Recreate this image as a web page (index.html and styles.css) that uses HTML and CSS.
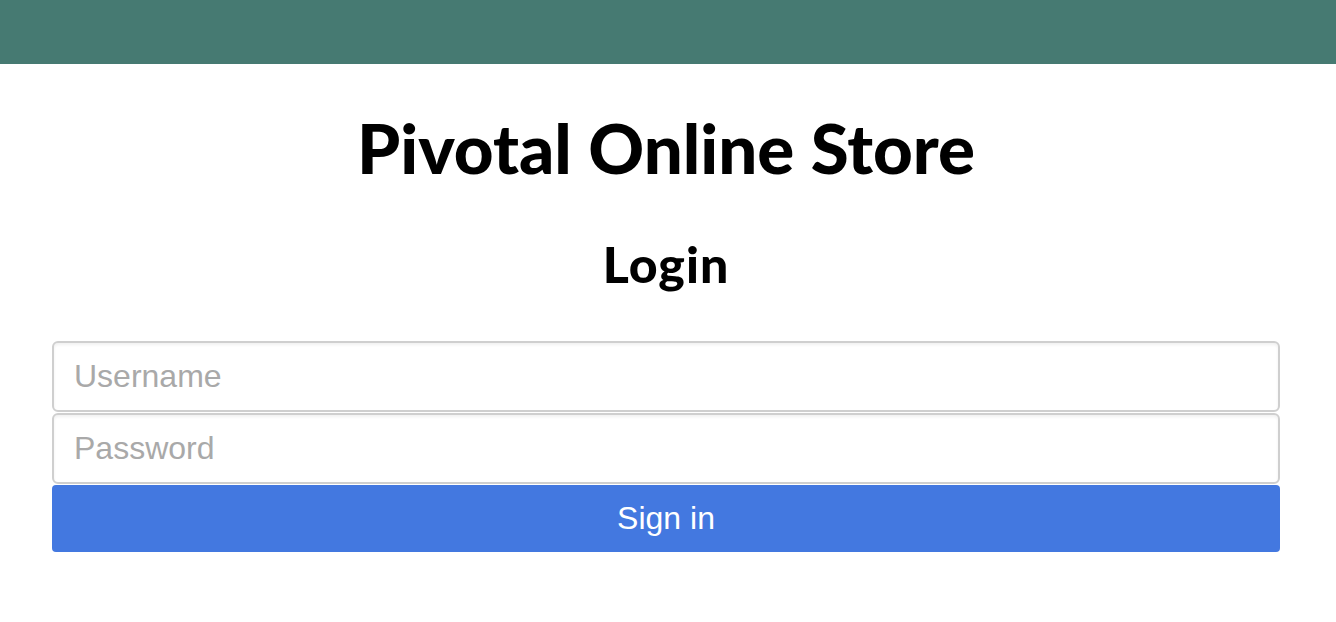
FILE: index.html
```html
<!DOCTYPE html>
<html>
<head>
<meta charset="utf-8">
<link rel="stylesheet" href="styles.css">
</head>
<body>
<header class="topbar"></header>
<main class="content">
  <h1 class="title">Pivotal Online Store</h1>
  <h2 class="subtitle">Login</h2>
  <form class="signin">
    <input class="field field-top" type="text" placeholder="Username">
    <input class="field field-bottom" type="password" placeholder="Password">
    <button class="btn" type="button">Sign in</button>
  </form>
</main>
</body>
</html>
```
FILE: styles.css
```css
html, body {
  margin: 0;
  padding: 0;
  background: #fff;
}
.topbar {
  height: 64px;
  background: #467a72;
}
.content {
  padding: 0 56px 0 52px;
}
.title {
  margin: 0;
  padding-top: 44px;
  font-family: "Lato", "Open Sans", sans-serif;
  font-weight: 900;
  font-size: 69px;
  line-height: 80px;
  text-align: center;
  color: #000;
}
.subtitle {
  margin: 0;
  padding-top: 46px;
  font-family: "Lato", "Open Sans", sans-serif;
  font-weight: 900;
  font-size: 50px;
  line-height: 60px;
  letter-spacing: 1px;
  text-align: center;
  color: #000;
}
.signin {
  display: flex;
  flex-direction: column;
  margin-top: 47px;
}
.field {
  box-sizing: border-box;
  height: 71px;
  margin: 0 0 1px;
  padding: 0 20px;
  border: 2px solid #cfcfcf;
  border-radius: 6px;
  box-shadow: inset 0 2px 3px rgba(0,0,0,0.06);
  font-family: "Liberation Sans", Arial, sans-serif;
  font-size: 32px;
  color: #333;
  outline: none;
}
.field::placeholder {
  color: #a9a9a9;
}
.btn {
  height: 67px;
  border: none;
  border-radius: 4px;
  background: #4378e0;
  color: #fff;
  font-family: "Liberation Sans", Arial, sans-serif;
  font-size: 32px;
  cursor: pointer;
}
```
